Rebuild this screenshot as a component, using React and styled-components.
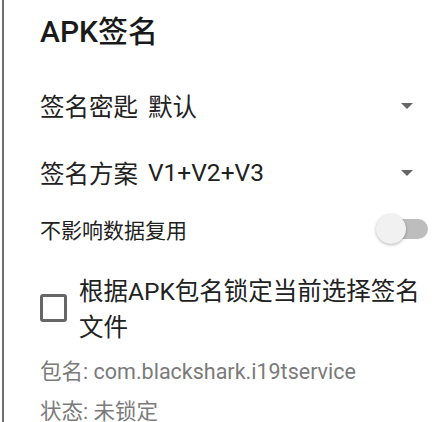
import React from 'react';
import styled, { createGlobalStyle } from 'styled-components';

const GlobalStyle = createGlobalStyle`
	html, body {
		margin: 0;
		padding: 0;
		background: #ffffff;
		overflow: hidden;
	}
	body {
		font-family: Roboto, "Noto Sans CJK SC", sans-serif;
		color: #212121;
	}
`;

const DialogRoot = styled.div`
	height: 422px;
	margin-left: 2px;
	border-left: 2px solid #6f6f6f;
	padding-left: 36px;
	box-sizing: border-box;
	overflow: hidden;
`;

const DialogTitle = styled.h1`
	margin: 12px 0 0 0;
	font-size: 30px;
	line-height: 40px;
	font-weight: 500;
	color: #1a1a1a;
`;

const SpinnerRow = styled.div`
	display: flex;
	align-items: center;
	height: 67px;
	padding-right: 22px;
	margin-top: ${(props) => (props.first ? '20px' : '0')};
`;

const SpinnerLabel = styled.span`
	font-size: 24.5px;
	color: #212121;
`;

const SpinnerValue = styled.span`
	font-size: 24.5px;
	color: #212121;
	margin-left: 10px;
	flex-grow: 1;
`;

const DropArrow = styled.span`
	width: 0;
	height: 0;
	border-left: 6px solid transparent;
	border-right: 6px solid transparent;
	border-top: 6px solid #666666;
`;

const SwitchRow = styled.div`
	display: flex;
	align-items: center;
	height: 46px;
	padding-right: 7px;
`;

const SwitchLabel = styled.span`
	flex-grow: 1;
	font-size: 21px;
	color: #212121;
`;

const SwitchBox = styled.div`
	position: relative;
	width: 52px;
	height: 32px;
`;

const SwitchTrack = styled.div`
	position: absolute;
	left: 4px;
	right: 0;
	top: 6px;
	height: 20px;
	border-radius: 10px;
	background: #bdbdbd;
`;

const SwitchThumb = styled.div`
	position: absolute;
	left: 0;
	top: 1px;
	width: 30px;
	height: 30px;
	border-radius: 50%;
	background: #f1f1f1;
	box-shadow: 0 1px 3px rgba(0, 0, 0, 0.3);
`;

const CheckRow = styled.label`
	display: flex;
	align-items: center;
	margin-top: 22px;
	padding-right: 10px;
`;

const CheckBox = styled.span`
	flex-shrink: 0;
	width: 21px;
	height: 22px;
	border: 3px solid #666666;
	border-radius: 3px;
	margin-right: 12px;
	margin-top: -4px;
`;

const CheckText = styled.span`
	font-size: 24.5px;
	line-height: 36px;
	color: #212121;
`;

const InfoLine = styled.div`
	display: flex;
	font-size: 21.5px;
	line-height: 30px;
	color: #7a7a7a;
	margin-top: ${(props) => props.gap || '0'};
`;

const HintText = styled.span`
	color: #e05050;
	opacity: 0.35;
	font-size: 18px;
	padding-top: 22px;
	margin-left: 126px;
`;

const Spinner = ({ label, value, first }) => (
	<SpinnerRow first={first}>
		<SpinnerLabel>{label}</SpinnerLabel>
		<SpinnerValue>{value}</SpinnerValue>
		<DropArrow />
	</SpinnerRow>
);

const App = () => {
	return (
		<>
			<GlobalStyle />
			<DialogRoot>
				<DialogTitle>APK签名</DialogTitle>
				<Spinner first label="签名密匙" value="默认" />
				<Spinner label="签名方案" value="V1+V2+V3" />
				<SwitchRow>
					<SwitchLabel>不影响数据复用</SwitchLabel>
					<SwitchBox>
						<SwitchTrack />
						<SwitchThumb />
					</SwitchBox>
				</SwitchRow>
				<CheckRow>
					<CheckBox />
					<CheckText>根据APK包名锁定当前选择签名文件</CheckText>
				</CheckRow>
				<InfoLine gap="11px">包名: com.blackshark.i19tservice</InfoLine>
				<InfoLine gap="10px">
					<span>状态: 未锁定</span>
					<HintText>(未选择签名)</HintText>
				</InfoLine>
			</DialogRoot>
		</>
	);
};

export default App;
